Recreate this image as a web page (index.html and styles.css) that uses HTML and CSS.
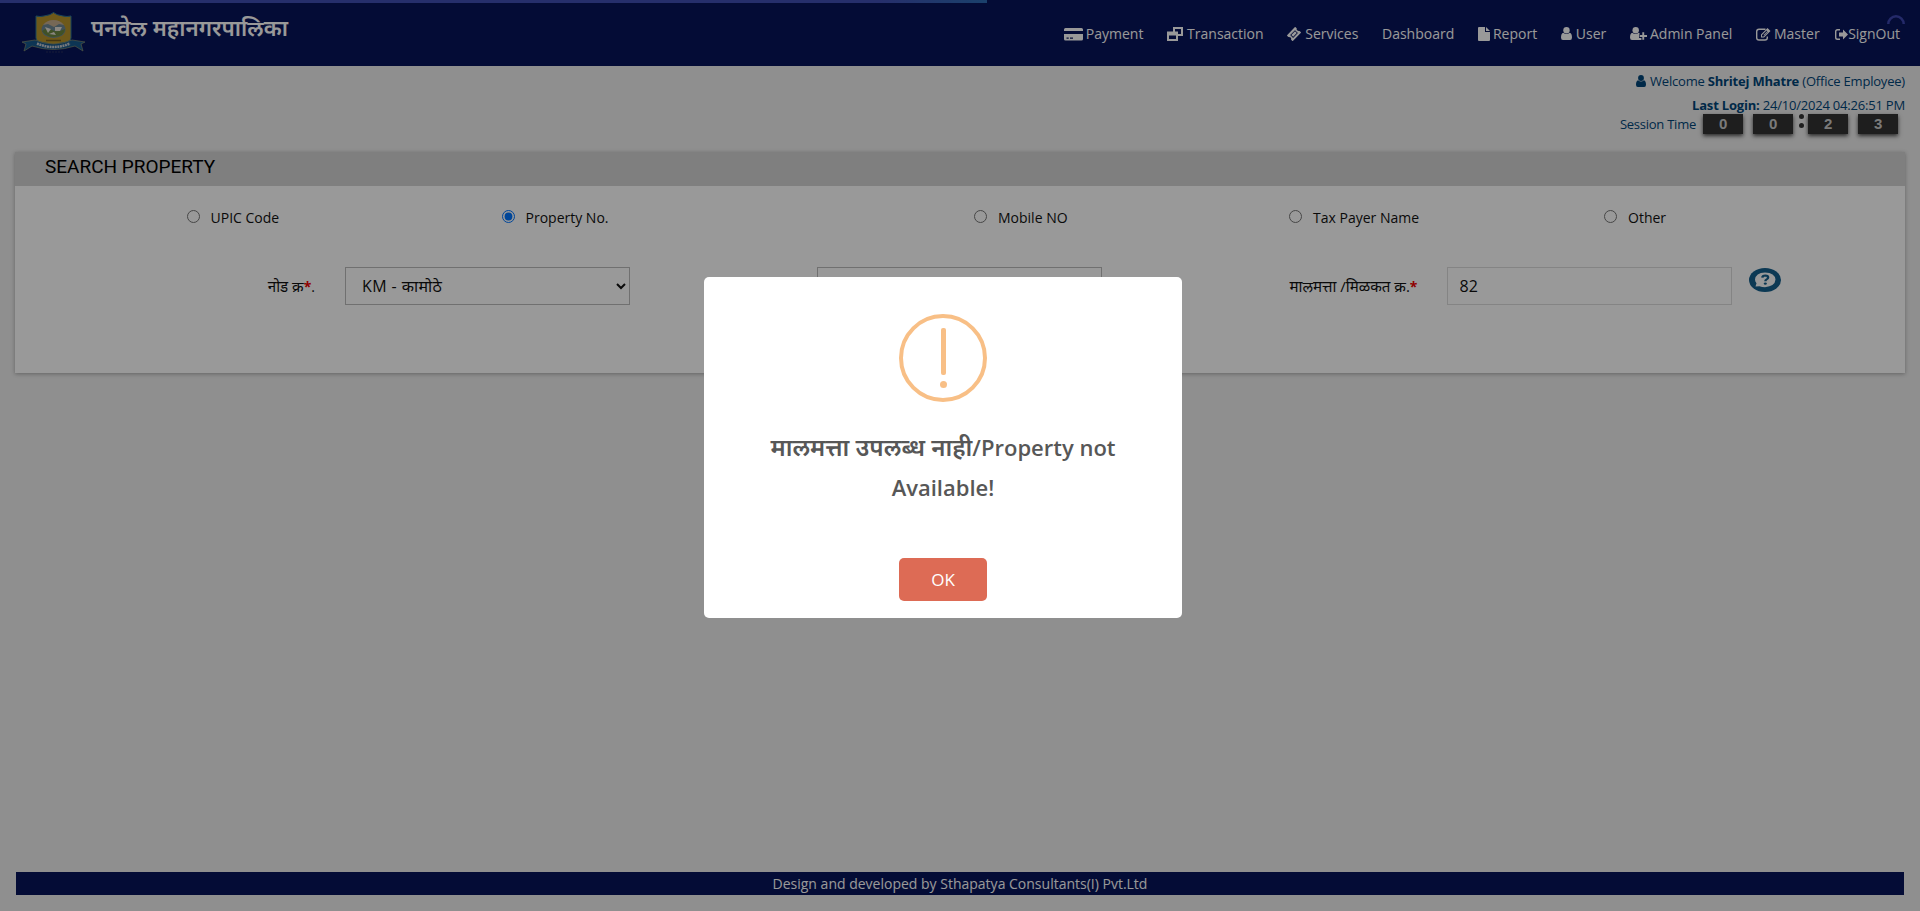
FILE: index.html
```html
<!DOCTYPE html>
<html lang="mr">
<head>
<meta charset="utf-8">
<title>Search Property</title>
<link rel="stylesheet" href="styles.css">
</head>
<body>
<header class="topbar">
  <div class="brand">
    <svg class="crest" viewBox="0 0 66 42">
      <path d="M15 4q4 1 8 0 7-1 9.500-3.500 2.500 2.500 9.500 3.500 4 1 8 0v22q0 3-4 4-8 1-13.500 3.500-5.500-2.500-13.500-3.500-4-1-4-4z" fill="#b8942c" stroke="#2d7697"/>
      <ellipse cx="32.500" cy="17.500" rx="12" ry="8.500" fill="#6d8794"/>
      <path d="M22 13q4-5 10.500-5t10.500 5l-5-1-5 3-6-3z" fill="#c5ad90"/>
      <path d="M21 19q5-4 10-1t13-1q0 7-11 8-8 0-12-6z" fill="#6b8840"/>
      <path d="M24 15l6 2-3 4zM34 15h7l-2 4h-5zM28 22l5-2 2 3z" fill="#e8e2d8"/>
      <path d="M25 28.500h15" stroke="#735a1c" stroke-width="1.500"/>
      <path d="M14 28q18.500 8 37 0l13 2-4 2 2 7-8-5q-21.500 7-43 0l-8 5 2-7-4-2z" fill="#17598c" stroke="#7c8870" stroke-width=".8"/>
      <path d="M16 31.500q16.500 7 33 0" fill="none" stroke="#c5c8ce" stroke-width="2.500" stroke-dasharray="2 .6"/>
      <path d="M25 40h17" stroke="#28315e" stroke-dasharray="2 1"/>
    </svg>
    <span class="brand-name">पनवेल महानगरपालिका</span>
  </div>
  <nav class="menu">
    <a class="item"><svg class="ico card" viewBox="0 0 19 14"><path fill-rule="evenodd" d="M1.500 0h16q1.500 0 1.500 1.500V3H0V1.500Q0 0 1.500 0zM0 6h19v5q0 1.500-1.500 1.500h-16Q0 12.500 0 11zM2.500 9.500v1.200h2.200V9.500zM6 9.500v1.200h3V9.500z"/></svg>Payment</a>
    <a class="item"><svg class="ico obj" viewBox="0 0 16 14"><path fill-rule="evenodd" d="M6 0h10v9h-5v5H0V4.500h6zM8 2v2.500h3V7h3V2zM2 8.500V12h7V8.500z"/></svg>Transaction</a>
    <a class="item"><svg class="ico tick" viewBox="0 0 14 14"><path fill-rule="evenodd" d="M8.700.3l1.100 1.100q-.5 1.500.7 2.200 1 .8 2 .3l1.200 1.200q.5.500 0 1l-7.600 7.600q-.5.500-1 0L4 12.600q.5-1.200-.4-2-1-.9-2.200-.6L.300 8.900q-.5-.5 0-1L7.700.300q.5-.5 1 0zM8 3.200L3.200 8l2.900 2.900L10.900 6zM8 4.300L9.800 6 6.100 9.700 4.300 8z"/></svg>Services</a>
    <a class="item">Dashboard</a>
    <a class="item"><svg class="ico file" viewBox="0 0 12 14"><path d="M1 0h6v5h5v8q0 1-1 1H1q-1 0-1-1V1q0-1 1-1zM8 0l4 4H8z"/></svg>Report</a>
    <a class="item"><svg class="ico user" viewBox="0 0 11 13"><circle cx="5.500" cy="3.200" r="3.200"/><path d="M2.300 5.700q3.200 2.700 6.400 0Q11 6.500 11 10.500 11 13 9 13H2q-2 0-2-2.500 0-4 2.300-4.800z"/></svg>User</a>
    <a class="item"><svg class="ico plus" viewBox="0 0 17 13"><circle cx="5.700" cy="3.200" r="3.200"/><path d="M2.300 5.700q3.200 2.700 6.400 0l1 .8v1.100H9.100v3.300h2.300V13H2q-2 0-2-2.500 0-4 2.300-4.800zM12.300 5.200h1.900V8H17v2h-2.800v2.800h-1.900V10H9.700V8h2.600z"/></svg>Admin Panel</a>
    <a class="item"><svg class="ico edit" viewBox="0 0 15 13"><path fill="none" stroke="currentColor" stroke-width="1.400" d="M9.500 1.300H3Q.700 1.300.700 3.500v6.300Q.700 12 3 12h6q2.300 0 2.300-2.200V8.500"/><path fill-rule="evenodd" d="M5 6.500L11.500 0l3 3L8 9.500H5zM6 7v1.500h1.500L12 4l-1.500-1.500z"/><path d="M7.500 7l4-4 .6.6-4 4z"/></svg>Master</a>
    <a class="item signout"><svg class="ico out" viewBox="0 0 13 11"><path fill="none" stroke="currentColor" stroke-width="1.400" d="M5 .700H2.500Q.700.700.700 2.500v6q0 1.800 1.800 1.800H5"/><path d="M4 3.500h4V.500l5 5-5 5v-3H4z"/></svg>SignOut</a>
  </nav>
</header>

<section class="session">
  <div class="welcome"><svg class="ico who" viewBox="0 0 11 13"><circle cx="5.500" cy="3.200" r="3.200"/><path d="M2.300 5.700q3.200 2.700 6.400 0Q11 6.500 11 10.500 11 13 9 13H2q-2 0-2-2.500 0-4 2.300-4.800z"/></svg>Welcome <b>Shritej Mhatre</b> (Office Employee)</div>
  <div class="last"><b>Last Login:</b> 24/10/2024 04:26:51 PM</div>
  <div class="timer">
    <span class="timer-label">Session Time</span>
    <span class="digit">0</span><span class="digit">0</span>
    <span class="dots"><i></i><i></i></span>
    <span class="digit">2</span><span class="digit">3</span>
  </div>
</section>

<main class="panel">
  <h1 class="panel-head">SEARCH PROPERTY</h1>
  <div class="row choices">
    <label class="choice c1"><input type="radio" name="by">UPIC Code</label>
    <label class="choice c2"><input type="radio" name="by" checked>Property No.</label>
    <label class="choice c3"><input type="radio" name="by">Mobile NO</label>
    <label class="choice c4"><input type="radio" name="by">Tax Payer Name</label>
    <label class="choice c5"><input type="radio" name="by">Other</label>
  </div>
  <div class="row fields">
    <label class="flabel l1"><span class="deva">नोड क्र</span><em>*</em>.</label>
    <div class="cell f1"><select class="control pick"><option>KM - कामोठे</option></select></div>
    <div class="cell f2"><select class="control"></select></div>
    <label class="flabel l3"><span class="deva">मालमत्ता /मिळकत क्र.</span><em>*</em></label>
    <div class="cell f3"><input class="control text" value="82"></div>
    <div class="help"><svg viewBox="0 0 32 30" preserveAspectRatio="none"><ellipse cx="16" cy="15" rx="16" ry="15" fill="#145f8c"/><path d="M6.500 23l1-4Q6 17 6 14.500 6.500 6 16 5.500q10 .5 10.500 9Q26 23 16 24q-3 0-5.500-1.300z" fill="#fff"/><path d="M13.300 12q.2-2.600 3-2.600 2.900.2 2.800 2.500 0 1.500-1.600 2.500-1.100.7-1.100 2.100" fill="none" stroke="#145f8c" stroke-width="2.400"/><circle cx="16.300" cy="19.500" r="1.500" fill="#145f8c"/></svg></div>
  </div>
</main>

<footer class="foot">Design and developed by Sthapatya Consultants(I) Pvt.Ltd</footer>

<div class="progress"></div>
<svg class="spinner" viewBox="0 0 18 18"><path d="M1.300 9a7.700 7.700 0 0 1 15.400 0" fill="none" stroke="#3c46b0" stroke-width="2.500"/></svg>

<div class="overlay">
  <div class="modal">
    <svg class="warn" viewBox="0 0 88 88"><circle cx="44" cy="44" r="42" fill="none" stroke="#f8bf86" stroke-width="4"/><rect x="42" y="14" width="5" height="47" rx="2" fill="#f8bf86"/><circle cx="44.500" cy="70.500" r="3.500" fill="#f8bf86"/></svg>
    <h2 class="message"><span class="deva-title">मालमत्ता उपलब्ध नाही</span>/Property not Available!</h2>
    <button class="ok">OK</button>
  </div>
</div>
</body>
</html>
```
FILE: styles.css
```css
* { box-sizing: border-box; }
body {
  margin: 0;
  height: 911px;
  display: flex;
  flex-direction: column;
  overflow: hidden;
  background: #eee;
  font: 14px/20px "Open Sans", "Noto Sans", sans-serif;
  color: #111;
}
.topbar {
  height: 66px;
  flex: none;
  display: flex;
  justify-content: space-between;
  background: #08145a;
  color: #fff;
}
.brand { display: flex; padding: 12px 0 0 21px; }
.crest { width: 66px; height: 42px; }
.brand-name {
  margin-left: 4px;
  font: 600 22.3px/32px "Noto Sans", "Open Sans", sans-serif;
}
.menu { display: flex; padding: 24px 20px 0 0; font-size: 14px; }
.item { display: flex; margin-left: 23.7px; white-space: nowrap; }
.item.signout { margin-left: 15.5px; }
.ico { flex: none; fill: currentColor; margin: 3px 3px 0 0; }
.card { width: 19px; height: 14px; margin-top: 4px; }
.obj { width: 16px; height: 14px; margin-right: 4px; }
.tick { width: 14px; height: 14px; margin-right: 4px; }
.file { width: 12px; height: 14px; }
.user { width: 11px; height: 13px; margin-right: 4px; }
.plus { width: 17px; height: 13px; margin-right: 3px; }
.edit { width: 15px; height: 13px; margin-top: 4px; margin-right: 3px; }
.out { width: 13px; height: 11px; margin: 5px 0 0; }
.session {
  height: 86px;
  flex: none;
  padding: 5px 15px 0 0;
  display: flex;
  flex-direction: column;
  align-items: flex-end;
  color: #004579;
  font-size: 13px;
  letter-spacing: -.2px;
}
.welcome, .last { height: 23px; line-height: 21px; white-space: pre; }
.last { height: 20px; padding-top: 1px; }
.who { width: 10px; height: 12px; margin: 0 4px -1px 0; }
.timer { display: flex; align-items: flex-start; height: 20px; padding-right: 7px; }
.timer-label { line-height: 21px; margin-right: 7px; letter-spacing: -.25px; }
.digit {
  width: 40px;
  height: 20px;
  background: #333;
  color: #ccc;
  box-shadow: 0 2px 4px rgba(0, 0, 0, .7);
  font: bold 15px/19px "Liberation Sans", sans-serif;
  text-align: center;
}
.digit + .digit { margin-left: 10px; }
.dots { width: 15px; padding-left: 1px; display: flex; flex-direction: column; align-items: center; gap: 4px; }
.dots i { width: 5px; height: 5px; border-radius: 50%; background: #333; }
.panel {
  height: 221px;
  flex: none;
  margin: 0 15px;
  background: #fff;
  box-shadow: 0 1px 4px rgba(0, 0, 0, .3);
}
.panel-head {
  margin: 0;
  height: 34px;
  padding-left: 30px;
  background: #d4d4d4;
  color: #000;
  font: 400 19px/30px Roboto, sans-serif;
}
.row { display: grid; grid-template-columns: repeat(12, minmax(0, 1fr)); }
.choices { padding-top: 22px; height: 81px; }
.choice { padding-left: 14px; display: flex; align-items: flex-start; }
.choice input { width: 13px; height: 13px; margin: 2px 11px 0 0; }
.c1 { grid-column: 2 / span 2; }
.c2 { grid-column: 4 / span 2; }
.c3 { grid-column: 7 / span 2; }
.c4 { grid-column: 9 / span 2; }
.c5 { grid-column: 11 / span 2; }
.flabel { padding: 9px 15px 0 0; text-align: right; white-space: nowrap; }
.flabel em { color: #f00000; font-style: normal; font-weight: 700; }
.deva { font-size: 15.1px; }
.l1 { grid-column: 1 / span 2; }
.f1 { grid-column: 3 / span 2; }
.f2 { grid-column: 6 / span 2; }
.l3 { grid-column: 8 / span 2; }
.f3 { grid-column: 10 / span 2; }
.cell { padding: 0 15px; }
.cell.f2, .cell.f3 { padding: 0 16px 0 14px; }
.control {
  display: block;
  width: 100%;
  height: 38px;
  padding: 0 12px;
  border: 1px solid #bbb;
  border-radius: 0;
  background: #fff;
  color: #111;
  font: 16px "Open Sans", "Noto Sans", sans-serif;
}
.pick { letter-spacing: .4px; }
.text { border-color: #ddd; }
.help svg { display: block; width: 32px; height: 24px; margin-top: 1px; margin-left: 1px; }
.foot {
  height: 23px;
  flex: none;
  margin: auto 16px 16px;
  background: #08145a;
  color: #fff;
  text-align: center;
  line-height: 23px;
}
.progress {
  position: absolute;
  top: 0;
  left: 0;
  width: 987px;
  height: 3px;
  background: linear-gradient(90deg, #404fb4 0, #404fb4 880px, #2d6db4 987px);
  box-shadow: 4px 0 9px -2px #2d7fc4;
}
.spinner { position: absolute; top: 15px; right: 15px; width: 18px; height: 18px; }
.overlay {
  position: absolute;
  inset: 0;
  padding-left: 704px;
  padding-top: 277px;
  background: rgba(0, 0, 0, .4);
}
.modal {
  width: 478px;
  height: 341px;
  padding-top: 37px;
  display: flex;
  flex-direction: column;
  align-items: center;
  border-radius: 5px;
  background: #fff;
}
.warn { width: 88px; height: 88px; flex: none; }
.message {
  width: 400px;
  height: 80px;
  margin: 25px 0 0;
  color: #575757;
  font: 600 22px/40px "Open Sans", "Noto Sans", sans-serif;
  text-align: center;
}
.deva-title { font-size: 24.1px; line-height: 1; }
.ok {
  width: 88px;
  height: 43px;
  margin-top: 51px;
  border: 0;
  border-radius: 5px;
  background: #dd6b55;
  color: #fff;
  font: 500 17px "Open Sans", sans-serif;
}
```
